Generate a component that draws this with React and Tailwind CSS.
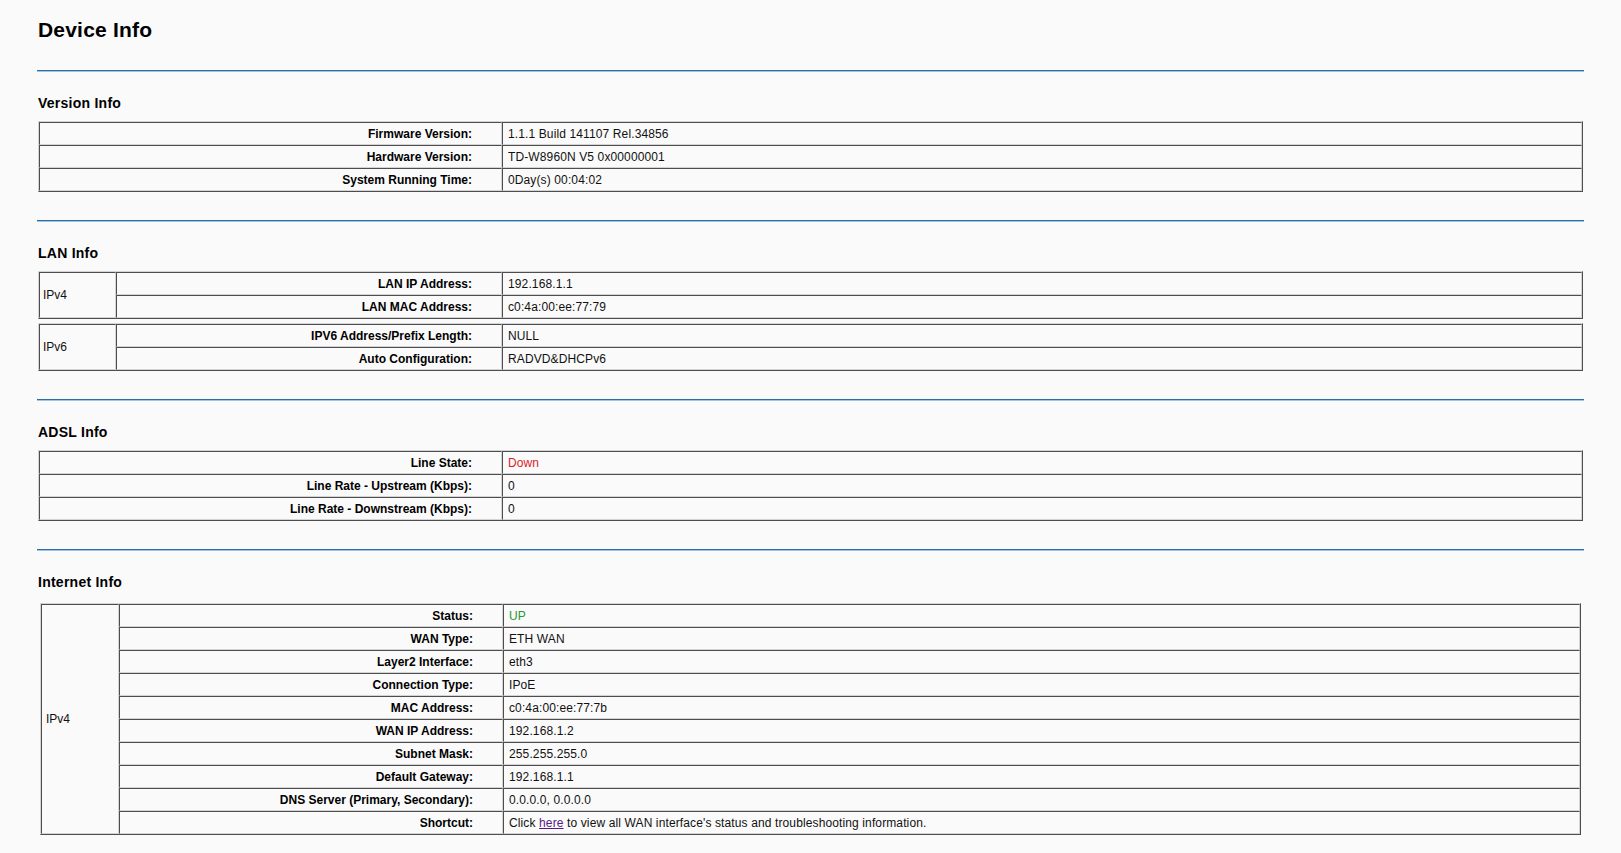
import React from "react";

const CELL =
  "border border-t-[#4d4d4d] border-l-[#4d4d4d] border-b-[#d4d4d4] border-r-[#d4d4d4]";
const TABLE =
  "border border-t-[#d4d4d4] border-l-[#d4d4d4] border-b-[#4d4d4d] border-r-[#4d4d4d]";

function Line() {
  return (
    <div className="mt-[28px]">
      <div className="h-px bg-[#2d6da5]" />
      <div className="h-px bg-[#a3c4e1]" />
    </div>
  );
}

function Title({ children }) {
  return (
    <div className="mt-[23px] ml-px text-[14px] leading-[16px] font-bold tracking-[0.25px] text-black">
      {children}
    </div>
  );
}

function Row({ label, value, labelW }) {
  return (
    <div className="flex h-[23px]">
      <div
        className={`${CELL} ${labelW} shrink-0 flex items-center justify-end pr-[29px] font-bold text-black`}
      >
        {label}
      </div>
      <div
        className={`${CELL} flex-1 flex items-center pl-[5px] tracking-[0.12px] text-[#111]`}
      >
        {value}
      </div>
    </div>
  );
}

function SimpleTable({ rows }) {
  return (
    <div className={`${TABLE} mt-[10px] mx-px`}>
      {rows.map((r, i) => (
        <Row key={i} label={r[0]} value={r[1]} labelW="w-[463px]" />
      ))}
    </div>
  );
}

function GroupTable({ group, rows, className, groupW, labelW, groupPad }) {
  return (
    <div className={`${TABLE} flex ${className}`}>
      <div
        className={`${CELL} ${groupW} shrink-0 flex items-center ${groupPad} text-[#111]`}
      >
        {group}
      </div>
      <div className="flex-1 flex flex-col">
        {rows.map((r, i) => (
          <Row key={i} label={r[0]} value={r[1]} labelW={labelW} />
        ))}
      </div>
    </div>
  );
}

export default function App() {
  return (
    <div
      className="min-h-screen bg-[#fafafa] pl-[37px] pr-[37px] pb-[18px] text-[12px] leading-[14px]"
      style={{ fontFamily: '"Liberation Sans", Arial, sans-serif' }}
    >
      <div className="pt-[18px] ml-px text-[21px] leading-[24px] font-bold tracking-[0.2px] text-black">
        Device Info
      </div>

      <Line />
      <Title>Version Info</Title>
      <SimpleTable
        rows={[
          ["Firmware Version:", "1.1.1 Build 141107 Rel.34856"],
          ["Hardware Version:", "TD-W8960N V5 0x00000001"],
          ["System Running Time:", "0Day(s) 00:04:02"],
        ]}
      />

      <Line />
      <Title>LAN Info</Title>
      <GroupTable
        className="mt-[10px] mx-px"
        group="IPv4"
        groupW="w-[77px]"
        labelW="w-[386px]"
        groupPad="pl-[3px]"
        rows={[
          ["LAN IP Address:", "192.168.1.1"],
          ["LAN MAC Address:", "c0:4a:00:ee:77:79"],
        ]}
      />
      <GroupTable
        className="mt-[4px] mx-px"
        group="IPv6"
        groupW="w-[77px]"
        labelW="w-[386px]"
        groupPad="pl-[3px]"
        rows={[
          ["IPV6 Address/Prefix Length:", "NULL"],
          ["Auto Configuration:", "RADVD&DHCPv6"],
        ]}
      />

      <Line />
      <Title>ADSL Info</Title>
      <SimpleTable
        rows={[
          ["Line State:", <span className="text-[#d81e1e]">Down</span>],
          ["Line Rate - Upstream (Kbps):", "0"],
          ["Line Rate - Downstream (Kbps):", "0"],
        ]}
      />

      <Line />
      <Title>Internet Info</Title>
      <GroupTable
        className="mt-[13px] mx-[3px]"
        group="IPv4"
        groupW="w-[78px]"
        labelW="w-[384px]"
        groupPad="pl-[4px]"
        rows={[
          ["Status:", <span className="text-[#2b982b]">UP</span>],
          ["WAN Type:", "ETH WAN"],
          ["Layer2 Interface:", "eth3"],
          ["Connection Type:", "IPoE"],
          ["MAC Address:", "c0:4a:00:ee:77:7b"],
          ["WAN IP Address:", "192.168.1.2"],
          ["Subnet Mask:", "255.255.255.0"],
          ["Default Gateway:", "192.168.1.1"],
          ["DNS Server (Primary, Secondary):", "0.0.0.0, 0.0.0.0"],
          [
            "Shortcut:",
            <span>
              Click{" "}
              <a href="#" className="text-[#551a8b] underline">
                here
              </a>{" "}
              to view all WAN interface's status and troubleshooting information.
            </span>,
          ],
        ]}
      />
    </div>
  );
}
